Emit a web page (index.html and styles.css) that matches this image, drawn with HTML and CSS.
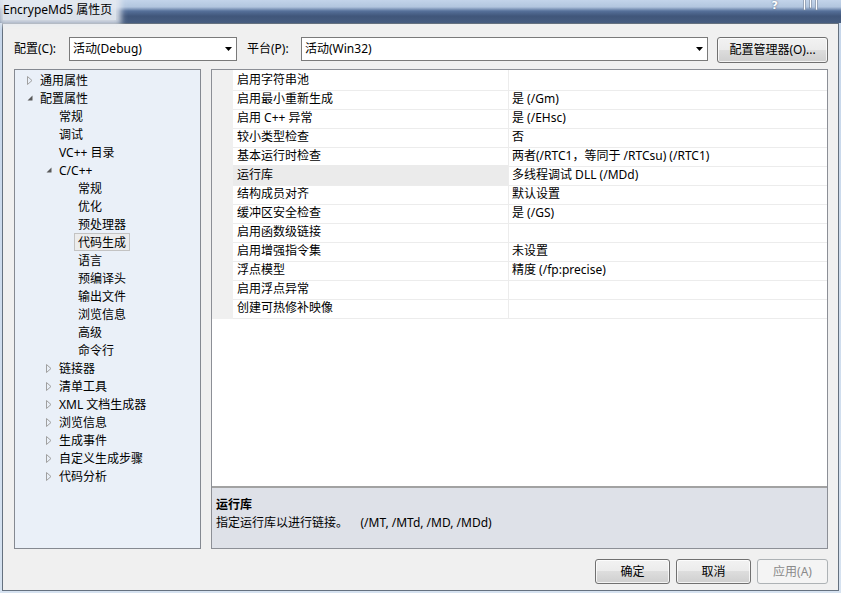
FILE: index.html
```html
<!DOCTYPE html>
<html lang="zh-CN">
<head>
    <meta charset="UTF-8">
    <title>EncrypeMd5 属性页</title>
    <link rel="stylesheet" href="styles.css">
</head>
<body>
<div class="window">
    <div class="titlebar">
        <span class="titlebar__text">EncrypeMd5 属性页</span>
        <span class="titlebar__help">?</span>
        <svg class="titlebar__bars" width="16" height="11" viewBox="0 0 16 11">
            <rect x="0.5" y="-1" width="2" height="11" fill="#fff" stroke="#6b7c94" stroke-width="0.6"/>
            <rect x="6.5" y="-1" width="2" height="9" fill="#fff" stroke="#6b7c94" stroke-width="0.6"/>
            <rect x="12.5" y="-1" width="2" height="11" fill="#fff" stroke="#6b7c94" stroke-width="0.6"/>
        </svg>
    </div>
    <div class="client">
        <div class="toolbar">
            <span class="lbl lbl--cfg">配置(C):</span>
            <div class="combo combo--cfg">
                <span class="combo__text">活动(Debug)</span>
                <svg class="combo__arrow" width="7" height="4" viewBox="0 0 7 4"><path d="M0 0H7L3.5 4Z" fill="#000"/></svg>
            </div>
            <span class="lbl lbl--plat">平台(P):</span>
            <div class="combo combo--plat">
                <span class="combo__text">活动(Win32)</span>
                <svg class="combo__arrow" width="7" height="4" viewBox="0 0 7 4"><path d="M0 0H7L3.5 4Z" fill="#000"/></svg>
            </div>
            <div class="btn btn--mgr">配置管理器(O)...</div>
        </div>

        <div class="main">
            <div class="tree">
                <div class="tree__item tree__item--l0"><span class="tree__arrow tree__arrow--closed"></span><span class="tree__text">通用属性</span></div>
                <div class="tree__item tree__item--l0"><span class="tree__arrow tree__arrow--open"></span><span class="tree__text">配置属性</span></div>
                <div class="tree__item tree__item--l1"><span class="tree__arrow"></span><span class="tree__text">常规</span></div>
                <div class="tree__item tree__item--l1"><span class="tree__arrow"></span><span class="tree__text">调试</span></div>
                <div class="tree__item tree__item--l1"><span class="tree__arrow"></span><span class="tree__text">VC++ 目录</span></div>
                <div class="tree__item tree__item--l1"><span class="tree__arrow tree__arrow--open"></span><span class="tree__text">C/C++</span></div>
                <div class="tree__item tree__item--l2"><span class="tree__arrow"></span><span class="tree__text">常规</span></div>
                <div class="tree__item tree__item--l2"><span class="tree__arrow"></span><span class="tree__text">优化</span></div>
                <div class="tree__item tree__item--l2"><span class="tree__arrow"></span><span class="tree__text">预处理器</span></div>
                <div class="tree__item tree__item--l2"><span class="tree__arrow"></span><span class="tree__text tree__text--sel">代码生成</span></div>
                <div class="tree__item tree__item--l2"><span class="tree__arrow"></span><span class="tree__text">语言</span></div>
                <div class="tree__item tree__item--l2"><span class="tree__arrow"></span><span class="tree__text">预编译头</span></div>
                <div class="tree__item tree__item--l2"><span class="tree__arrow"></span><span class="tree__text">输出文件</span></div>
                <div class="tree__item tree__item--l2"><span class="tree__arrow"></span><span class="tree__text">浏览信息</span></div>
                <div class="tree__item tree__item--l2"><span class="tree__arrow"></span><span class="tree__text">高级</span></div>
                <div class="tree__item tree__item--l2"><span class="tree__arrow"></span><span class="tree__text">命令行</span></div>
                <div class="tree__item tree__item--l1"><span class="tree__arrow tree__arrow--closed"></span><span class="tree__text">链接器</span></div>
                <div class="tree__item tree__item--l1"><span class="tree__arrow tree__arrow--closed"></span><span class="tree__text">清单工具</span></div>
                <div class="tree__item tree__item--l1"><span class="tree__arrow tree__arrow--closed"></span><span class="tree__text">XML 文档生成器</span></div>
                <div class="tree__item tree__item--l1"><span class="tree__arrow tree__arrow--closed"></span><span class="tree__text">浏览信息</span></div>
                <div class="tree__item tree__item--l1"><span class="tree__arrow tree__arrow--closed"></span><span class="tree__text">生成事件</span></div>
                <div class="tree__item tree__item--l1"><span class="tree__arrow tree__arrow--closed"></span><span class="tree__text">自定义生成步骤</span></div>
                <div class="tree__item tree__item--l1"><span class="tree__arrow tree__arrow--closed"></span><span class="tree__text">代码分析</span></div>
            </div>

            <div class="props">
                <div class="grid">
                    <div class="row"><div class="row__gutter"></div><div class="row__name">启用字符串池</div><div class="row__value"></div></div>
                    <div class="row"><div class="row__gutter"></div><div class="row__name">启用最小重新生成</div><div class="row__value">是 (/Gm)</div></div>
                    <div class="row"><div class="row__gutter"></div><div class="row__name">启用 C++ 异常</div><div class="row__value">是 (/EHsc)</div></div>
                    <div class="row"><div class="row__gutter"></div><div class="row__name">较小类型检查</div><div class="row__value">否</div></div>
                    <div class="row"><div class="row__gutter"></div><div class="row__name">基本运行时检查</div><div class="row__value">两者(/RTC1，等同于 /RTCsu) (/RTC1)</div></div>
                    <div class="row row--sel"><div class="row__gutter"></div><div class="row__name">运行库</div><div class="row__value">多线程调试 DLL (/MDd)</div></div>
                    <div class="row"><div class="row__gutter"></div><div class="row__name">结构成员对齐</div><div class="row__value">默认设置</div></div>
                    <div class="row"><div class="row__gutter"></div><div class="row__name">缓冲区安全检查</div><div class="row__value">是 (/GS)</div></div>
                    <div class="row"><div class="row__gutter"></div><div class="row__name">启用函数级链接</div><div class="row__value"></div></div>
                    <div class="row"><div class="row__gutter"></div><div class="row__name">启用增强指令集</div><div class="row__value">未设置</div></div>
                    <div class="row"><div class="row__gutter"></div><div class="row__name">浮点模型</div><div class="row__value">精度 (/fp:precise)</div></div>
                    <div class="row"><div class="row__gutter"></div><div class="row__name">启用浮点异常</div><div class="row__value"></div></div>
                    <div class="row"><div class="row__gutter"></div><div class="row__name">创建可热修补映像</div><div class="row__value"></div></div>
                </div>
                <div class="desc">
                    <div class="desc__title">运行库</div>
                    <div class="desc__text">指定运行库以进行链接。    (/MT, /MTd, /MD, /MDd)</div>
                </div>
            </div>
        </div>

        <div class="footer">
            <div class="btn btn--ok">确定</div>
            <div class="btn btn--cancel">取消</div>
            <div class="btn btn--apply btn--disabled">应用(A)</div>
        </div>
    </div>
</div>
</body>
</html>
```

FILE: styles.css
```css
body {
    margin:0;
    font:12px/1.5 "Noto Sans", "Noto Sans CJK SC", sans-serif;
    color:#000;
}
.window {
    width:841px;
    height:593px;
    overflow:hidden;
    background:linear-gradient(to bottom, #c6d6ea, #d6e2f0);
}

/* title bar (aero glass) */
.titlebar {
    height:23px;
    display:flex;
    align-items:flex-start;
    background:linear-gradient(to bottom, #c3d4ea 0, #b2c6df 30%, #56709a 48%, #40567a 70%, #475d80 100%);
}
.titlebar__text {
    margin-left:3px;
    padding-right:4px;
    line-height:20px;
    color:#000;
    background:rgba(228,233,240,.95);
    box-shadow:0 0 6px 5px rgba(228,233,240,.9);
}
.titlebar__help {
    margin-left:auto;
    font:bold 11px/12px "DejaVu Sans", sans-serif;
    color:#fff;
    text-shadow:0 0 2px #4d5d75;
}
.titlebar__bars {
    margin-left:25px;
    margin-right:22px;
}

/* dialog client area */
.client {
    margin:0 2px;
    height:568px;
    box-sizing:border-box;
    border:1px solid #65717f;
    background:#f0f0f0;
}
.toolbar {
    display:flex;
    align-items:flex-start;
    padding:13px 10px 0 11px;
    height:26px;
}
.lbl {
    line-height:24px;
    box-sizing:border-box;
}
.lbl--cfg { width:55px; }
.lbl--plat { width:54px; margin-left:10px; }
.combo {
    height:24px;
    box-sizing:border-box;
    border:1px solid #7a7a7a;
    background:#fff;
    display:flex;
    align-items:center;
    justify-content:space-between;
    padding:0 4px 0 3px;
}
.combo--cfg { width:168px; }
.combo--plat { width:407px; }
.combo__text { line-height:20px; }

.btn {
    height:26px;
    box-sizing:border-box;
    border:1px solid #707070;
    border-radius:3px;
    background:linear-gradient(to bottom, #f2f2f2 0, #ebebeb 50%, #dddddd 50%, #cfcfcf 100%);
    box-shadow:inset 0 0 0 1px rgba(255,255,255,.75);
    text-align:center;
    line-height:24px;
}
.btn--mgr { width:111px; margin-left:9px; }

/* main area */
.main {
    display:flex;
    margin-top:6px;
    padding:0 10px 0 11px;
    height:480px;
}
.tree {
    width:187px;
    box-sizing:border-box;
    border:1px solid #858991;
    background:#eaf0f8;
    padding-top:1px;
}
.tree__item {
    display:flex;
    align-items:center;
    height:18px;
}
.tree__item--l0 { padding-left:12px; }
.tree__item--l1 { padding-left:31px; }
.tree__item--l2 { padding-left:50px; }
.tree__arrow {
    width:13px;
    height:18px;
    flex:none;
    background-repeat:no-repeat;
}
.tree__arrow--closed {
    background-image:url("data:image/svg+xml,%3Csvg xmlns='http://www.w3.org/2000/svg' width='6' height='9'%3E%3Cpath d='M0.5 0.5L5 4.5L0.5 8.5Z' fill='none' stroke='%23a0a0a0'/%3E%3C/svg%3E");
    background-position:0 5px;
}
.tree__arrow--open {
    background-image:url("data:image/svg+xml,%3Csvg xmlns='http://www.w3.org/2000/svg' width='6' height='6'%3E%3Cpath d='M5.5 0.5V5.5H0.5Z' fill='%23595959'/%3E%3C/svg%3E");
    background-position:0 6px;
}
.tree__text {
    margin-left:-4px;
    padding:1px 3px 0;
    height:18px;
    box-sizing:border-box;
    border:1px solid transparent;
    line-height:16px;
    white-space:nowrap;
}
.tree__text--sel {
    border-color:#c3c3c3;
    background:#ececec;
}

.props {
    margin-left:10px;
    flex:1;
    display:flex;
    flex-direction:column;
    box-sizing:border-box;
    border:1px solid #8c8f96;
}
.grid {
    flex:1;
    background:#fff;
}
.row {
    display:grid;
    grid-template-columns:21px 276px 1fr;
    height:19px;
}
.row__gutter { background:#f0f0f0; }
.row__name,
.row__value {
    border-bottom:1px solid #ececec;
    line-height:20px;
    white-space:nowrap;
}
.row__name {
    padding-left:4px;
    border-right:1px solid #ececec;
}
.row__value { padding-left:3px; }
.row--sel .row__name { background:#ebebeb; }

.desc {
    height:62px;
    box-sizing:border-box;
    border-top:2px solid #a2a2a2;
    background:#dee1e8;
    padding:8px 4px 0;
    line-height:18px;
}
.desc__title { font-weight:bold; }
.desc__text { white-space:pre; }

/* footer buttons */
.footer {
    display:flex;
    justify-content:flex-end;
    gap:6px;
    margin-top:10px;
    padding-right:10px;
}
.footer .btn { height:25px; line-height:23px; }
.btn--ok,
.btn--cancel { width:75px; }
.btn--apply { width:71px; }
.btn--disabled {
    border-color:#adb2b5;
    background:#f4f4f4;
    box-shadow:none;
    color:#8a8a8a;
}
```
